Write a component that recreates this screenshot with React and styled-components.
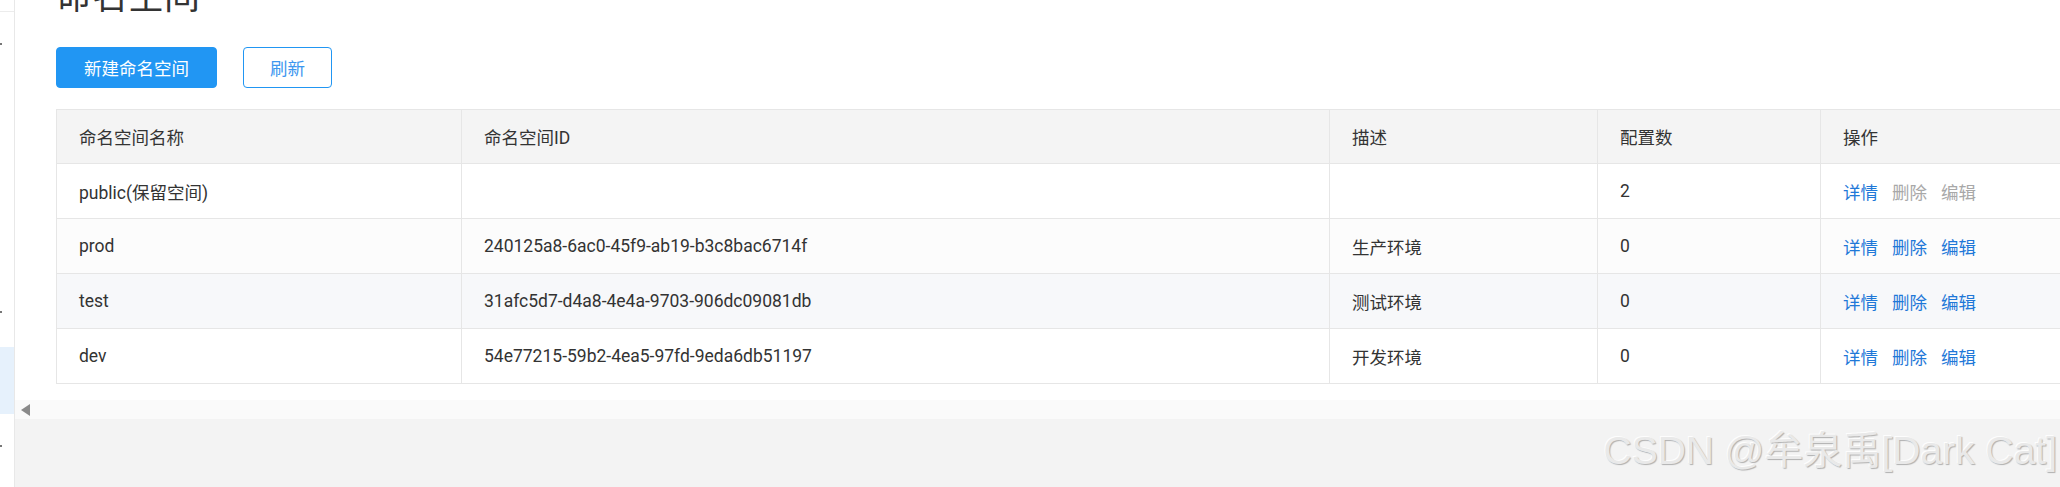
import React from 'react';
import styled, { createGlobalStyle } from 'styled-components';

const GlobalStyle = createGlobalStyle`
	html, body {
		margin: 0;
		padding: 0;
		width: 2060px;
		height: 487px;
		overflow: hidden;
		background: #fff;
	}
	body {
		font-family: Roboto, 'Noto Sans CJK SC', sans-serif;
		font-size: 17.5px;
		color: #333;
	}
`;

const namespaces = [
	{ name: 'public(保留空间)', id: '', desc: '', count: 2, reserved: true },
	{ name: 'prod', id: '240125a8-6ac0-45f9-ab19-b3c8bac6714f', desc: '生产环境', count: 0, bg: '#fcfcfc' },
	{ name: 'test', id: '31afc5d7-d4a8-4e4a-9703-906dc09081db', desc: '测试环境', count: 0, bg: '#f7f8fa' },
	{ name: 'dev', id: '54e77215-59b2-4ea5-97fd-9eda6db51197', desc: '开发环境', count: 0 },
];

const sideItems = [
	{ dot: true },
	{},
	{},
	{},
	{ dot: true },
	{ active: true },
	{ dot: true },
];

const App = () => {
	return (
		<>
			<GlobalStyle />
			<Layout>
				<Sidebar>
					<SideHeader />
					{sideItems.map((item, i) => (
						<SideItem key={i} $active={item.active}>
							{item.dot ? <SideDot /> : null}
						</SideItem>
					))}
				</Sidebar>
				<Main>
					<Content>
						<Title>命名空间</Title>
						<Toolbar>
							<Button $primary>新建命名空间</Button>
							<Button>刷新</Button>
						</Toolbar>
						<Table>
							<colgroup>
								<col style={{ width: 405 }} />
								<col style={{ width: 868 }} />
								<col style={{ width: 268 }} />
								<col style={{ width: 223 }} />
								<col style={{ width: 400 }} />
							</colgroup>
							<thead>
								<HeadRow>
									<Th>命名空间名称</Th>
									<Th>命名空间ID</Th>
									<Th>描述</Th>
									<Th>配置数</Th>
									<Th>操作</Th>
								</HeadRow>
							</thead>
							<tbody>
								{namespaces.map((ns) => (
									<Row key={ns.name} $bg={ns.bg}>
										<Td>{ns.name}</Td>
										<Td>{ns.id}</Td>
										<Td>{ns.desc}</Td>
										<Td>{ns.count}</Td>
										<Td>
											<Actions>
												<ActionLink>详情</ActionLink>
												<ActionLink $disabled={ns.reserved}>删除</ActionLink>
												<ActionLink $disabled={ns.reserved}>编辑</ActionLink>
											</Actions>
										</Td>
									</Row>
								))}
							</tbody>
						</Table>
					</Content>
					<ScrollTrack>
						<ScrollArrow />
					</ScrollTrack>
					<Footer>
						<Watermark>CSDN @牟泉禹[Dark Cat]</Watermark>
					</Footer>
				</Main>
			</Layout>
		</>
	);
};

const Layout = styled.div`
	display: flex;
	width: 2060px;
	height: 487px;
	overflow: hidden;
`;

const Sidebar = styled.div`
	box-sizing: border-box;
	width: 15px;
	flex-shrink: 0;
	border-right: 1px solid #e8e8e8;
	background: #fff;
	display: flex;
	flex-direction: column;
`;

const SideHeader = styled.div`
	height: 11px;
	border-bottom: 1px solid #ececec;
`;

const SideItem = styled.div`
	height: 67px;
	display: flex;
	align-items: center;
	background: ${(p) => (p.$active ? '#e6f1fc' : 'transparent')};
`;

const SideDot = styled.span`
	width: 2px;
	height: 2px;
	margin-top: -4px;
	background: #777;
`;

const Main = styled.div`
	flex: 1;
	min-width: 0;
	display: flex;
	flex-direction: column;
	overflow: hidden;
`;

const Content = styled.div`
	background: #fff;
	padding: 0 0 16px 41px;
`;

const Title = styled.h1`
	margin: -25px 0 0 0;
	font-size: 36px;
	font-weight: 400;
	line-height: 44px;
	color: #333;
	letter-spacing: 0;
`;

const Toolbar = styled.div`
	display: flex;
	gap: 26px;
	margin-top: 28px;
	margin-bottom: 21px;
`;

const Button = styled.button`
	box-sizing: border-box;
	height: 41px;
	width: ${(p) => (p.$primary ? '161px' : '89px')};
	border-radius: 4px;
	border: 1px solid #2196f3;
	background: ${(p) => (p.$primary ? '#2196f3' : '#fff')};
	color: ${(p) => (p.$primary ? '#fff' : '#3d97ef')};
	font-family: Roboto, 'Noto Sans CJK SC', sans-serif;
	font-size: 17.5px;
	padding: 0;
	cursor: pointer;
`;

const Table = styled.table`
	table-layout: fixed;
	border-collapse: collapse;
	width: 2164px;
	border-left: 1px solid #e6e6e6;
`;

const HeadRow = styled.tr`
	height: 54px;
	background: #f4f4f4;
`;

const Row = styled.tr`
	height: 55px;
	background: ${(p) => p.$bg || '#fff'};
`;

const Th = styled.th`
	box-sizing: border-box;
	border: 1px solid #e6e6e6;
	padding: 0 22px;
	text-align: left;
	font-weight: 400;
	color: #333;
`;

const Td = styled.td`
	box-sizing: border-box;
	border: 1px solid #e6e6e6;
	padding: 0 22px;
	color: #333;
	white-space: nowrap;
`;

const Actions = styled.div`
	display: flex;
	gap: 14px;
`;

const ActionLink = styled.a`
	color: ${(p) => (p.$disabled ? '#a8a8a8' : '#1f78d8')};
	cursor: ${(p) => (p.$disabled ? 'not-allowed' : 'pointer')};
`;

const ScrollTrack = styled.div`
	height: 19px;
	background: #fafafa;
	display: flex;
	align-items: center;
	padding-left: 6px;
`;

const ScrollArrow = styled.span`
	width: 0;
	height: 0;
	border-top: 6px solid transparent;
	border-bottom: 6px solid transparent;
	border-right: 9px solid #8a8a8a;
`;

const Footer = styled.div`
	flex: 1;
	background: #f3f3f3;
	display: flex;
	justify-content: flex-end;
	align-items: flex-start;
	padding-right: 3px;
`;

const Watermark = styled.div`
	margin-top: 8px;
	font-family: 'Liberation Sans', 'Noto Sans CJK SC', sans-serif;
	font-size: 39px;
	line-height: 48px;
	color: #e9e9e9;
	text-shadow: 1px 1px 1px rgba(0, 0, 0, 0.28), -1px -1px 0 rgba(255, 255, 255, 0.9);
	white-space: nowrap;
`;

export default App;
